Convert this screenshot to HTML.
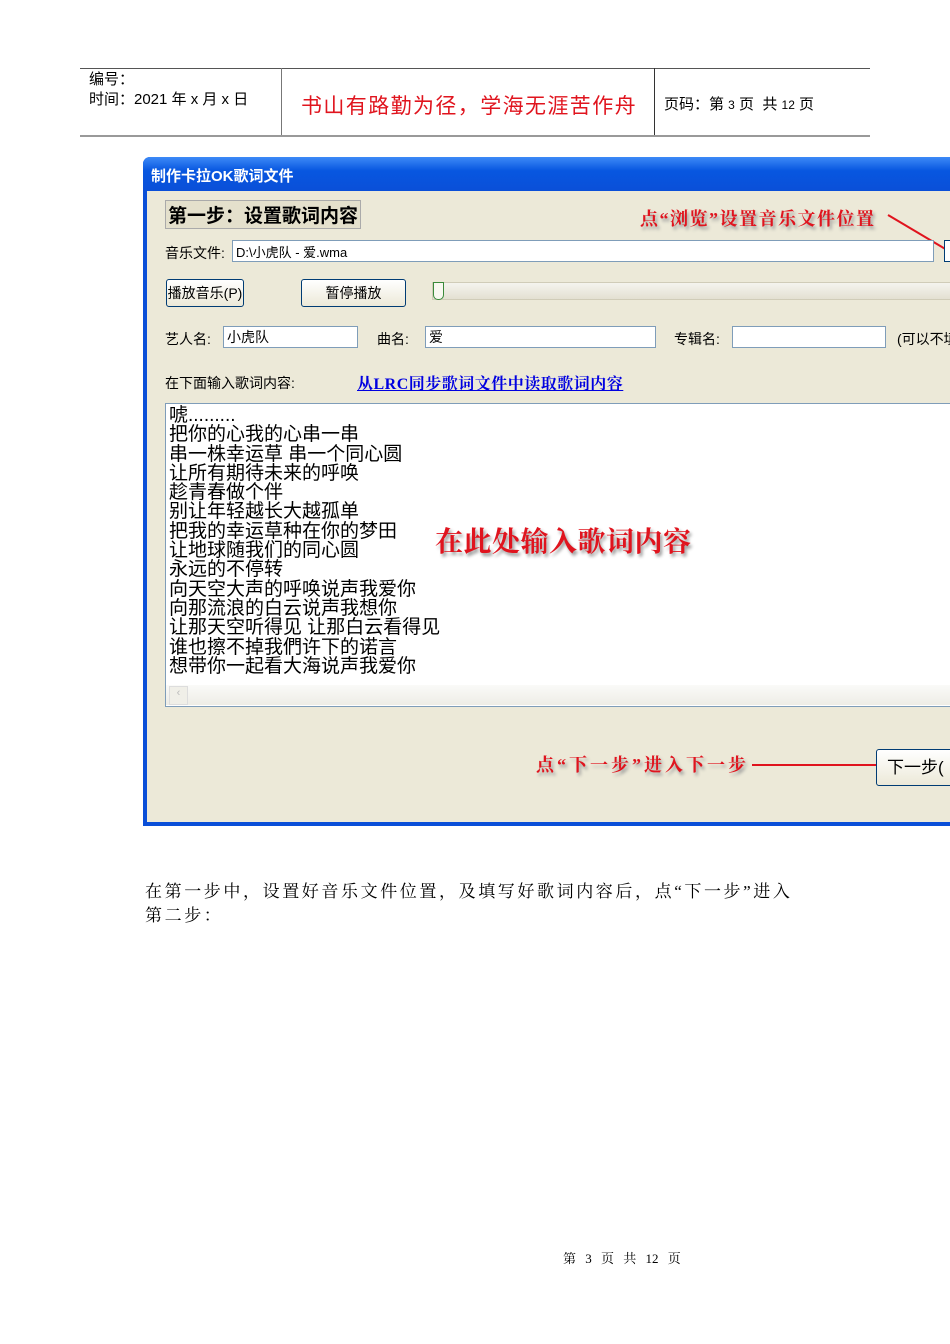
<!DOCTYPE html>
<html><head><meta charset="utf-8"><style>
body{margin:0;width:950px;height:1344px;background:#fff;position:relative;overflow:hidden;font-family:"Liberation Sans","Noto Sans CJK SC",sans-serif;}
.a{position:absolute;white-space:nowrap}
.sf{font-family:"Liberation Serif","Noto Serif CJK SC",serif}
.inp{position:absolute;background:#fff;border:1px solid #7f9db9;height:22px;box-sizing:border-box}
.btn{position:absolute;border:1px solid #003c74;border-radius:3px;background:linear-gradient(#fff,#ece9d8);font-size:14px;text-align:center;box-sizing:border-box}
.red{color:#e0141e;font-weight:bold;text-shadow:2px 3px 3px #999}
</style></head><body>
<div class="a" style="left:80px;top:68px;width:790px;border-top:1px solid #555"></div>
<div class="a" style="left:80px;top:135px;width:790px;border-top:2px solid #999"></div>
<div class="a" style="left:281px;top:68px;height:67px;border-left:1px solid #777"></div>
<div class="a" style="left:654px;top:68px;height:67px;border-left:1px solid #333"></div>
<div class="a" style="left:89px;top:70px;font-size:15px;line-height:20px">编号：<br>时间：2021 年 x 月 x 日</div>
<div class="a" style="left:301px;top:90px;font-size:21px;color:#e0141e;letter-spacing:1.4px">书山有路勤为径，学海无涯苦作舟</div>
<div class="a" style="left:664px;top:93px;font-size:15px">页码：第 <span style="font-size:12px">3</span> 页 &nbsp;共 <span style="font-size:12px">12</span> 页</div>

<div class="a" style="left:143px;top:157px;width:820px;height:669px;background:#0a4fd8;border-radius:7px 7px 0 0"></div>
<div class="a" style="left:143px;top:157px;width:820px;height:34px;background:linear-gradient(#3d8af7,#0857e0 40%,#0a4fd8);border-radius:7px 7px 0 0"></div>
<div class="a" style="left:151px;top:165px;font-size:15px;color:#fff;font-weight:bold">制作卡拉OK歌词文件</div>
<div class="a" style="left:147px;top:191px;width:810px;height:631px;background:#ece9d8"></div>
<div class="a" style="left:165px;top:200px;padding:0 2px;border:1px solid #aaa;font-size:19px;font-weight:bold;background:#e4e0cc">第一步：设置歌词内容</div>
<div class="a red sf" style="left:640px;top:205px;font-size:18px;letter-spacing:1.5px">点“浏览”设置音乐文件位置</div>
<svg class="a" style="left:885px;top:210px" width="70" height="50"><path d="M3 5 L62 40" stroke="#e0141e" stroke-width="2" fill="none"/></svg>
<div class="a" style="left:165px;top:243px;font-size:14px">音乐文件:</div>
<div class="inp" style="left:232px;top:240px;width:702px;font-size:13px;padding:1px 3px">D:\小虎队 - 爱.wma</div>
<div class="inp" style="left:944px;top:240px;width:20px;border-color:#003c74"></div>
<div class="btn" style="left:166px;top:279px;width:78px;height:28px;line-height:26px">播放音乐(P)</div>
<div class="btn" style="left:301px;top:279px;width:105px;height:28px;line-height:26px">暂停播放</div>
<div class="a" style="left:432px;top:282px;width:520px;height:16px;background:linear-gradient(#f5f4ee,#e3e0d2);border:1px solid #d0ccb8"></div>
<div class="a" style="left:433px;top:282px;width:9px;height:16px;border:1px solid #3a8a3a;border-radius:0 0 5px 5px;background:#f8f8f0"></div>
<div class="a" style="left:165px;top:329px;font-size:14px">艺人名:</div>
<div class="inp" style="left:223px;top:326px;width:135px;font-size:14px;padding:0 3px">小虎队</div>
<div class="a" style="left:377px;top:329px;font-size:14px">曲名:</div>
<div class="inp" style="left:425px;top:326px;width:231px;font-size:14px;padding:0 3px">爱</div>
<div class="a" style="left:674px;top:329px;font-size:14px">专辑名:</div>
<div class="inp" style="left:732px;top:326px;width:154px"></div>
<div class="a" style="left:897px;top:329px;font-size:14px">(可以不填</div>
<div class="a" style="left:165px;top:373px;font-size:14px">在下面输入歌词内容:</div>
<div class="a sf" style="left:357px;top:371px;font-size:16px;color:#0000e0;font-weight:bold;text-decoration:underline;letter-spacing:0.5px">从LRC同步歌词文件中读取歌词内容</div>
<div class="a" style="left:165px;top:403px;width:800px;height:304px;background:#fff;border:1px solid #7f9db9;box-sizing:border-box"></div>
<div class="a" style="left:169px;top:406px;font-size:19px;line-height:19.3px;letter-spacing:0px">唬.........<br>把你的心我的心串一串<br>串一株幸运草 串一个同心圆<br>让所有期待未来的呼唤<br>趁青春做个伴<br>别让年轻越长大越孤单<br>把我的幸运草种在你的梦田<br>让地球随我们的同心圆<br>永远的不停转<br>向天空大声的呼唤说声我爱你<br>向那流浪的白云说声我想你<br>让那天空听得见 让那白云看得见<br>谁也擦不掉我們许下的诺言<br>想带你一起看大海说声我爱你</div>
<div class="a" style="left:166px;top:685px;width:800px;height:20px;background:linear-gradient(#fafaf8,#eeede6)"></div>
<div class="a" style="left:169px;top:686px;width:17px;height:17px;background:#f0efe8;border:1px solid #ddd;font-size:11px;color:#bbb;text-align:center">‹</div>
<div class="a red sf" style="left:435px;top:520px;font-size:28px;letter-spacing:0.5px">在此处输入歌词内容</div>
<div class="a red sf" style="left:536px;top:751px;font-size:18px;letter-spacing:3px">点“下一步”进入下一步</div>
<div class="a" style="left:752px;top:764px;width:126px;border-top:2px solid #e0141e"></div>
<div class="btn" style="left:876px;top:749px;width:90px;height:37px;line-height:35px;font-size:17px;text-align:left;padding-left:10px">下一步(</div>
<div class="a sf" style="left:145px;top:880px;font-size:17px;line-height:24px;letter-spacing:2.6px">在第一步中，设置好音乐文件位置，及填写好歌词内容后，点“下一步”进入<br>第二步：</div>
<div class="a sf" style="left:563px;top:1248px;font-size:13px;word-spacing:6px">第 3 页 共 12 页</div>
</body></html>
